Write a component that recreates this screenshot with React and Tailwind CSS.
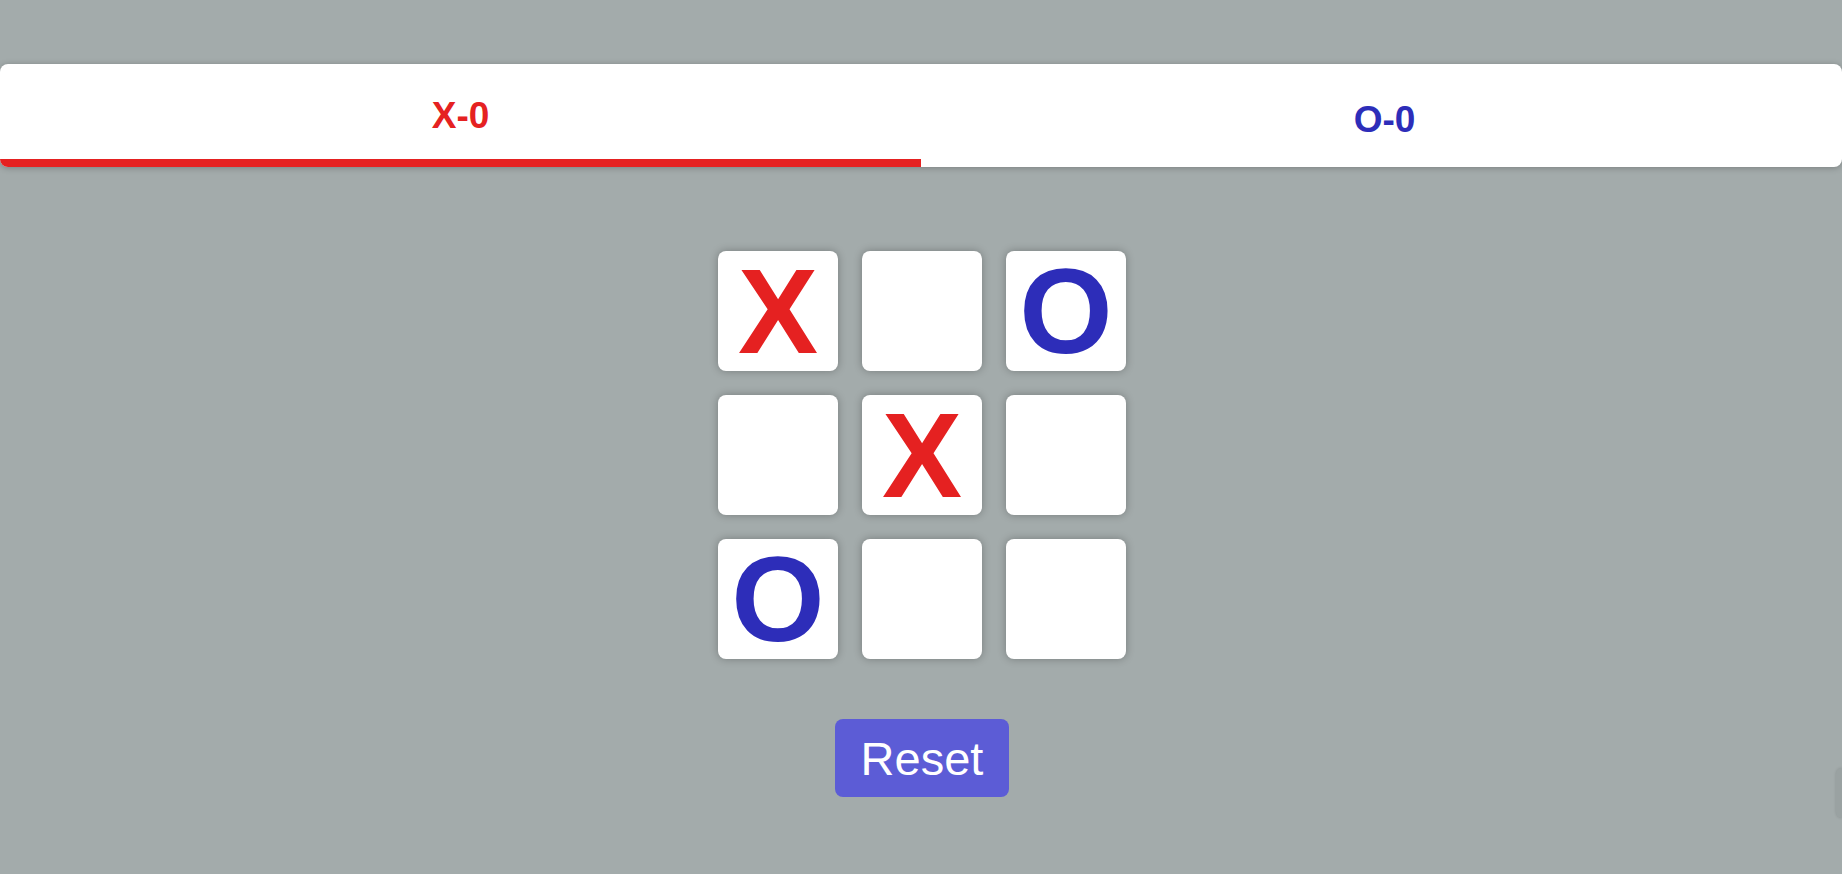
import React, { useState } from 'react';

const X_COLOR = "text-[#e52121]";
const O_COLOR = "text-[#2d2db9]";

const initialBoard = ["X", "", "O", "", "X", "", "O", "", ""];

const Cell = ({ value, onClick }) => {
    return (
        <button
            onClick={onClick}
            className="w-[120px] h-[120px] bg-white rounded-lg shadow-[0_0_8px_rgba(0,0,0,0.28)] flex items-center justify-center"
        >
            <span className={`text-[120px] leading-none font-bold ${value === "X" ? X_COLOR : O_COLOR}`}>
                {value}
            </span>
        </button>
    );
};

const App = () => {
    const [board, setBoard] = useState(initialBoard);
    const [turn, setTurn] = useState("O");

    const play = (i) => {
        if (board[i]) return;
        const next = [...board];
        next[i] = turn;
        setBoard(next);
        setTurn(turn === "X" ? "O" : "X");
    };

    const reset = () => {
        setBoard(Array(9).fill(""));
        setTurn("X");
    };

    return (
        <div className="min-h-screen bg-[#a3abab] font-['Liberation_Sans',Arial,sans-serif] relative overflow-hidden">
            {/* Score header */}
            <div className="pt-[64px]">
                <div className="flex w-full h-[103px] bg-white rounded-lg overflow-hidden shadow-[0_1px_6px_rgba(0,0,0,0.25)]">
                    <div className="flex-1 flex items-center justify-center pt-2 border-b-8 border-[#e52121]">
                        <span className={`text-[37px] leading-none font-bold ${X_COLOR}`}>X-0</span>
                    </div>
                    <div className="flex-1 flex items-center justify-center pt-2">
                        <span className={`text-[37px] leading-none font-bold translate-x-[3px] ${O_COLOR}`}>O-0</span>
                    </div>
                </div>
            </div>

            {/* Board */}
            <div className="flex flex-col items-center mt-[84px]">
                <div className="grid grid-cols-3 gap-6 translate-x-px">
                    {board.map((value, i) => (
                        <Cell key={i} value={value} onClick={() => play(i)} />
                    ))}
                </div>

                <button
                    onClick={reset}
                    className="mt-[60px] w-[174px] h-[78px] rounded-lg bg-[#5c5cd6] text-white text-[47px] leading-none flex items-center justify-center translate-x-px"
                >
                    Reset
                </button>
            </div>

            {/* Side widget peeking in */}
            <div className="absolute right-0 top-[768px] w-[6px] h-[50px] rounded-l-lg bg-[#9aa2a2] shadow-[0_0_3px_rgba(0,0,0,0.15)]" />
        </div>
    );
};

export default App;
